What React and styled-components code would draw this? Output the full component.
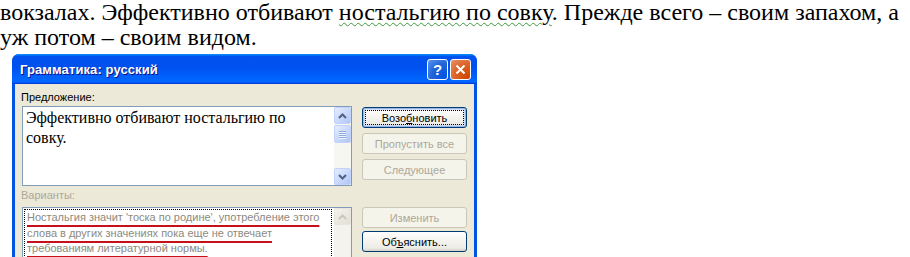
import React from "react";
import styled, { createGlobalStyle } from "styled-components";

const Global = createGlobalStyle`
  html, body {
    margin: 0;
    padding: 0;
    background: #ffffff;
    overflow: hidden;
  }
`;

const Page = styled.div`
  width: 910px;
  height: 257px;
  overflow: hidden;
`;

const Doc = styled.p`
  margin: 0;
  font-family: "Liberation Serif", "Times New Roman", serif;
  font-size: 24px;
  line-height: 25px;
  color: #000;
  white-space: nowrap;
`;

const Wavy = styled.span`
  text-decoration-line: underline;
  text-decoration-style: wavy;
  text-decoration-color: #3f9a3f;
  text-decoration-thickness: 1px;
  text-underline-offset: 2px;
`;

const Window = styled.div`
  margin: 4px 0 0 12px;
  width: 465px;
  border-radius: 7px 7px 0 0;
  overflow: hidden;
  background: #0054e3;
`;

const TitleBar = styled.div`
  height: 30px;
  display: flex;
  align-items: center;
  justify-content: space-between;
  padding: 0 6px 0 8px;
  background: linear-gradient(
    180deg,
    #0997ff 0%,
    #0053ee 8%,
    #0050ee 40%,
    #0066ff 88%,
    #0066ff 93%,
    #005bff 95%,
    #003dd7 96%,
    #003dd7 100%
  );
`;

const Title = styled.span`
  font-family: "Liberation Sans", Arial, sans-serif;
  font-weight: bold;
  font-size: 13px;
  color: #fff;
  text-shadow: 1px 1px #0f1089;
  letter-spacing: 0.1px;
`;

const TitleButtons = styled.div`
  display: flex;
  gap: 2px;
`;

const CapButton = styled.div`
  width: 21px;
  height: 21px;
  box-sizing: border-box;
  border: 1px solid #fff;
  border-radius: 3px;
  display: flex;
  align-items: center;
  justify-content: center;
  background: ${(p) =>
    p.$close
      ? "radial-gradient(circle at 90% 90%, #cc4600 0%, #dc6527 55%, #e5875e 90%, #f0a88a 100%)"
      : "radial-gradient(circle at 90% 90%, #0054e9 0%, #2263d5 55%, #4d8cf0 90%, #76a6f4 100%)"};
  color: #fff;
  font-family: "Liberation Sans", Arial, sans-serif;
  font-weight: bold;
  font-size: 15px;
`;

const Body = styled.div`
  margin: 0 3px;
  background: #ece9d8;
  padding: 7px 7px 0 7px;
  height: 180px;
  font-family: "Liberation Sans", Tahoma, sans-serif;
  font-size: 11px;
`;

const Section = styled.div`
  display: grid;
  grid-template-columns: 330px 105px;
  column-gap: 10px;
  margin-top: ${(p) => p.$top || 0}px;
`;

const Label = styled.div`
  grid-column: 1;
  margin-left: -1px;
  height: 13px;
  line-height: 13px;
  color: ${(p) => (p.$disabled ? "#aca899" : "#000")};
  margin-bottom: ${(p) => p.$gap || 2}px;
`;

const Field = styled.div`
  grid-column: 1;
  height: ${(p) => p.$h}px;
  box-sizing: border-box;
  border: 1px solid #7f9db9;
  background: #fff;
  display: flex;
`;

const FieldText = styled.div`
  flex: 1;
  padding: 1px 3px;
  font-family: "Liberation Serif", "Times New Roman", serif;
  font-size: 16px;
  line-height: 20px;
  color: #000;
`;

const Suggest = styled.div`
  flex: 1;
  margin: 1px 2px 0 1px;
  border: 1px dotted #000;
  padding: 0 2px;
  color: #8c8a80;
  font-size: 11px;
  line-height: 15.5px;
  white-space: nowrap;
`;

const RedLine = styled.span`
  text-decoration: underline;
  text-decoration-color: #c8101a;
  text-underline-offset: 4px;
  text-decoration-thickness: 1.5px;
`;

const ScrollBar = styled.div`
  width: 17px;
  display: flex;
  flex-direction: column;
  justify-content: space-between;
  background: ${(p) => (p.$disabled ? "#f4f3ee" : "#f7f7f1")};
`;

const ScrollTop = styled.div`
  display: flex;
  flex-direction: column;
  gap: 1px;
`;

const ScrollBtn = styled.div`
  width: 17px;
  height: 17px;
  box-sizing: border-box;
  border: 1px solid ${(p) => (p.$disabled ? "#e8e6dc" : "#c3d3fd")};
  border-radius: 2px;
  background: ${(p) =>
    p.$disabled
      ? "linear-gradient(135deg, #f4f3ee, #e2dfd2)"
      : "linear-gradient(135deg, #e5edfd 0%, #c6d6fb 60%, #b2c6f3 100%)"};
  display: flex;
  align-items: center;
  justify-content: center;
`;

const Thumb = styled(ScrollBtn)`
  height: 18px;
  flex-direction: column;
  gap: 1px;
  span {
    display: block;
    width: 7px;
    height: 1px;
    background: #8fa9e3;
    box-shadow: 0 1px #eef3ff;
  }
`;

const Buttons = styled.div`
  grid-column: 2;
  grid-row: 2;
  display: flex;
  flex-direction: column;
  gap: ${(p) => p.$gap}px;
  margin-top: ${(p) => p.$top || 0}px;
`;

const Button = styled.div`
  height: 21px;
  box-sizing: border-box;
  border: 1px solid ${(p) => (p.$disabled ? "#c9c7ba" : "#003c74")};
  border-radius: 3px;
  background: ${(p) =>
    p.$disabled
      ? "#f5f4ea"
      : "linear-gradient(180deg, #ffffff 0%, #f4f3ee 50%, #ecebe6 85%, #d6d0c5 100%)"};
  color: ${(p) => (p.$disabled ? "#aca899" : "#000")};
  display: flex;
  align-items: center;
  justify-content: center;
  position: relative;
  box-shadow: ${(p) =>
    p.$default ? "inset 0 0 0 1px #99b5ea, inset 0 0 0 2px #cedcf6" : "none"};
  &::after {
    content: "";
    display: ${(p) => (p.$default ? "block" : "none")};
    position: absolute;
    inset: 2px;
    border: 1px dotted #000;
  }
`;

const Arrow = ({ up, disabled }) => (
  <svg width="9" height="6" viewBox="0 0 9 6">
    <path
      d={up ? "M1 5 L4.5 1.5 L8 5" : "M1 1 L4.5 4.5 L8 1"}
      fill="none"
      stroke={disabled ? "#c9c7ba" : "#4d6185"}
      strokeWidth="2"
    />
  </svg>
);

export default function App() {
  return (
    <Page>
      <Global />
      <Doc>
        вокзалах. Эффективно отбивают <Wavy>ностальгию по совку</Wavy>. Прежде
        всего – своим запахом, а
        <br />
        уж потом – своим видом.
      </Doc>
      <Window>
        <TitleBar>
          <Title>Грамматика: русский</Title>
          <TitleButtons>
            <CapButton>?</CapButton>
            <CapButton $close>
              <svg width="11" height="11" viewBox="0 0 11 11">
                <path d="M1.5 1.5 L9.5 9.5 M9.5 1.5 L1.5 9.5" stroke="#fff" strokeWidth="2" />
              </svg>
            </CapButton>
          </TitleButtons>
        </TitleBar>
        <Body>
          <Section>
            <Label>
              Пре<u>д</u>ложение:
            </Label>
            <Field $h={80}>
              <FieldText>
                Эффективно отбивают ностальгию по
                <br />
                совку.
              </FieldText>
              <ScrollBar>
                <ScrollTop>
                  <ScrollBtn>
                    <Arrow up />
                  </ScrollBtn>
                  <Thumb>
                    <span />
                    <span />
                    <span />
                    <span />
                  </Thumb>
                </ScrollTop>
                <ScrollBtn>
                  <Arrow />
                </ScrollBtn>
              </ScrollBar>
            </Field>
            <Buttons $gap={5} $top={1}>
              <Button $default>
                <span>
                  Возо<u>б</u>новить
                </span>
              </Button>
              <Button $disabled>Пропустить все</Button>
              <Button $disabled>Следующее</Button>
            </Buttons>
          </Section>
          <Section $top={3}>
            <Label $disabled $gap={5}>
              Варианты:
            </Label>
            <Field $h={70}>
              <Suggest>
                <RedLine>Ностальгия значит 'тоска по родине', употребление этого</RedLine>
                <br />
                <RedLine>слова в других значениях пока еще не отвечает</RedLine>
                <br />
                <RedLine>требованиям литературной нормы.</RedLine>
              </Suggest>
              <ScrollBar $disabled>
                <ScrollBtn $disabled>
                  <Arrow up disabled />
                </ScrollBtn>
              </ScrollBar>
            </Field>
            <Buttons $gap={3}>
              <Button $disabled>Изменить</Button>
              <Button>
                <span>
                  Об<u>ъ</u>яснить...
                </span>
              </Button>
            </Buttons>
          </Section>
        </Body>
      </Window>
    </Page>
  );
}
